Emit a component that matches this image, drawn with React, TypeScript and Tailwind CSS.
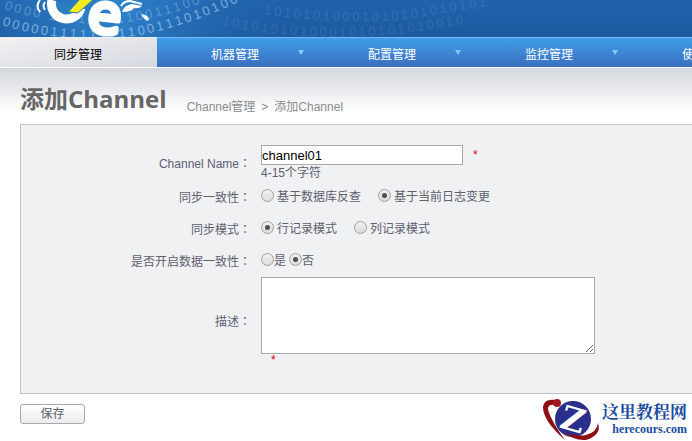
import { useState } from "react";
import type { ReactNode } from "react";

const menus = ["同步管理", "机器管理", "配置管理", "监控管理", "使用帮助"];

// rows of binary digits that run along the arcs of the banner
const digits = [
  { arc: "#arcTop", opacity: 0.35, text: "0000 1111001110011100" },
  { arc: "#arcMid", opacity: 0.6, text: "00000111111111001110101000" },
  { arc: "#arcRight", opacity: 0.13, text: "10101010001010101010101" },
  { arc: "#arcLow", opacity: 0.12, text: "1010101010001010101010010" },
];

function Banner() {
  return (
    <header className="h-[37px] overflow-hidden bg-linear-to-b from-[#2062ac] to-[#1d5a9f]">
      <svg width="692" height="37" className="block" aria-hidden="true">
        <defs>
          <radialGradient id="glow" cx="110" cy="10" r="180" gradientUnits="userSpaceOnUse">
            <stop offset="0" stopColor="#2f86cf" />
            <stop offset="1" stopColor="#2062ac" stopOpacity="0" />
          </radialGradient>
          <path id="arcTop" d="M4 9 Q50 24 110 24 Q160 20 215 -2" />
          <path id="arcMid" d="M2 25 C50 41 110 42 150 33 Q205 20 258 -8" />
          <path id="arcRight" d="M264 14 Q330 24 400 20 L500 4" />
          <path id="arcLow" d="M222 24 Q290 42 400 34 L500 18" />
        </defs>
        <rect width="400" height="37" fill="url(#glow)" />
        <g fontFamily="Liberation Sans, sans-serif" fontSize="13" fill="#b5d8f5">
          {digits.map((row) => (
            <text key={row.arc} opacity={row.opacity}>
              <textPath href={row.arc}>{row.text.split("").join("\u2009")}</textPath>
            </text>
          ))}
        </g>
        {/* bee logo */}
        <path d="M40 0 Q35 6 40 12 M45 2 Q42 6 45 10" fill="none" stroke="#fff" strokeWidth="2" />
        <path d="M52 0 A15 15 0 1 0 81 8" fill="#2b7dc6" stroke="#fff" strokeWidth="9" />
        <path d="M80 -1 L94 -1 L78 13 L68 12 Z" fill="#f5ea1c" stroke="#2374bd" strokeWidth="1" />
        <circle cx="105" cy="18" r="13" fill="#2b7dc6" />
        <text
          x="88"
          y="33"
          transform="rotate(6 105 18)"
          fontFamily="DejaVu Sans, sans-serif"
          fontSize="54"
          fill="#fff"
          stroke="#fff"
          strokeWidth="5"
          strokeLinejoin="round"
        >
          e
        </text>
        <path d="M122 12 Q124 5 132 4 L142 6 Q139 9 134 8 Q132 12 122 12 Z" fill="#fff" />
        <path d="M121 6 Q124 1 130 1 L142 4" fill="none" stroke="#fff" strokeWidth="2" />
        <path d="M141 14 Q149 15 149 20 Q146 23 141 14 Z" fill="#e8f6ff" />
      </svg>
    </header>
  );
}

function Nav() {
  const [active, setActive] = useState(0);
  return (
    <nav className="flex overflow-hidden bg-linear-to-b from-[#419fec] to-[#396fbd]">
      {menus.map((name, i) => (
        <button
          key={name}
          type="button"
          onClick={() => setActive(i)}
          className={
            i === active
              ? "flex h-[30px] w-[157px] shrink-0 items-center border-t border-[#eceef0] bg-linear-to-br from-[#f1f1f2] to-[#d5d9e0] pt-1 pl-[54px] text-black"
              : "flex h-[30px] w-[157px] shrink-0 items-center border-t border-[#72bdf6] pt-1 pr-[10px] pl-[54px] text-white"
          }
        >
          {name}
          {i !== active && (
            <svg width="6" height="5" className="mb-1 ml-auto" aria-hidden="true">
              <path d="M0 0H6L3 5Z" fill="#7fccfa" />
            </svg>
          )}
        </button>
      ))}
    </nav>
  );
}

function Label({ id, htmlFor, children }: { id?: string; htmlFor?: string; children: ReactNode }) {
  return (
    <label id={id} htmlFor={htmlFor} className="text-right">
      {children}
      <span className="font-['Noto_Sans_CJK_TC',sans-serif]">：</span>
    </label>
  );
}

function Radio({ name, text, checked, tight }: { name: string; text: string; checked?: boolean; tight?: boolean }) {
  return (
    <label className={tight ? "flex items-center" : "flex items-center gap-[3px]"}>
      <input
        type="radio"
        name={name}
        defaultChecked={checked}
        className="mb-1 flex size-[13px] appearance-none items-center justify-center rounded-full border border-[#a0a0a0] bg-linear-to-b from-[#f0f0f0] to-[#dcdcdc] checked:before:size-[5px] checked:before:rounded-full checked:before:bg-[#505050]"
      />
      {text}
    </label>
  );
}

function Watermark() {
  return (
    <div className="absolute right-[5px] bottom-0 flex items-start text-[#1c4c9f]">
      <svg width="62" height="42" viewBox="0 0 62 42" aria-hidden="true">
        <circle cx="33" cy="20" r="18" fill="#2b2f8c" />
        <text
          x="21"
          y="32"
          transform="rotate(16 33 20)"
          fontFamily="DejaVu Serif, serif"
          fontWeight="700"
          fontSize="33"
          fill="#fff"
        >
          Z
        </text>
        <path d="M16 1 Q4 -1 3 8 Q3 22 25 41 Q10 20 8 10 Q8 5 15 6 Z" fill="#8e1014" />
        <circle cx="17" cy="4" r="4" fill="#a3181c" />
        <path d="M58 24 Q62 36 46 41 Q34 42 24 33 Q36 38 46 36 Q57 33 58 24 Z" fill="#8e1014" />
      </svg>
      <div className="text-right">
        <div className="font-['Noto_Serif_CJK_SC','Noto_Sans_CJK_SC',serif] text-[17px] leading-6 font-bold">这里教程网</div>
        <div className="font-['Liberation_Serif',serif] text-xs leading-3 font-bold">herecours.com</div>
      </div>
    </div>
  );
}

export default function App() {
  return (
    <div className="relative min-h-screen overflow-hidden bg-white font-['Liberation_Sans','Noto_Sans_CJK_SC',sans-serif] text-xs text-[#5f6070]">
      <Banner />
      <Nav />
      <main className="border-t border-white bg-linear-to-b from-[#d3d7dd] to-white to-[44px] pb-4 pl-5">
        <div className="flex h-14 items-end gap-5 pb-[9px]">
          <h1 className="font-['Open_Sans','Noto_Sans_CJK_SC',sans-serif] text-2xl leading-8 font-bold text-[#666]">添加Channel</h1>
          <div className="flex gap-[6px] text-[#8c8c8c]">
            <a href="#channel">Channel管理</a>
            <span>&gt;</span>
            <span>添加Channel</span>
          </div>
        </div>

        <form onSubmit={(e) => e.preventDefault()}>
          <div className="grid grid-cols-[230px_1fr] items-center gap-x-[10px] border border-r-0 border-[#bfc4c9] bg-[#eff1f3] pt-5 pb-[27px]">
            <Label htmlFor="channel-name">Channel Name</Label>
            <div>
              <div className="flex items-center gap-[10px]">
                <input
                  id="channel-name"
                  type="text"
                  defaultValue="channel01"
                  className="h-5 w-[202px] border border-[#a9a9a9] bg-white text-[13px] text-black"
                />
                <span className="text-red-600">*</span>
              </div>
              <p>4-15个字符</p>
            </div>

            <Label id="consistency">同步一致性</Label>
            <div role="radiogroup" aria-labelledby="consistency" className="flex h-8 items-center gap-[17px]">
              <Radio name="consistency" text="基于数据库反查" />
              <Radio name="consistency" text="基于当前日志变更" checked />
            </div>

            <Label id="mode">同步模式</Label>
            <div role="radiogroup" aria-labelledby="mode" className="flex h-8 items-center gap-[17px]">
              <Radio name="mode" text="行记录模式" checked />
              <Radio name="mode" text="列记录模式" />
            </div>

            <Label id="recovery">是否开启数据一致性</Label>
            <div role="radiogroup" aria-labelledby="recovery" className="flex h-8 items-center gap-[3px]">
              <Radio name="recovery" text="是" tight />
              <Radio name="recovery" text="否" checked tight />
            </div>

            <Label htmlFor="description">描述</Label>
            <div>
              <textarea id="description" className="block h-[77px] w-[334px] border border-[#a9a9a9] bg-white" />
              <p className="h-3 pl-[10px] leading-3 text-red-600">*</p>
            </div>
          </div>

          <button
            type="submit"
            className="mt-[10px] h-5 w-[65px] rounded-[3px] border border-[#a8a8b0] bg-linear-to-b from-white to-[#ececee] leading-none"
          >
            保存
          </button>
        </form>
      </main>
      <Watermark />
    </div>
  );
}
